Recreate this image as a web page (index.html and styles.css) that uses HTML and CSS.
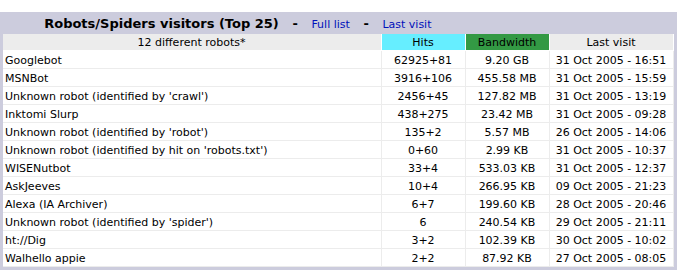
FILE: index.html
```html
<!DOCTYPE html>
<html>
<head>
<meta charset="utf-8">
<link rel="stylesheet" href="styles.css">
</head>
<body>
<div class="frame">
  <div class="title-row">
    <div class="title">Robots/Spiders visitors (Top 25) &nbsp; - &nbsp; <a href="#">Full list</a> &nbsp; - &nbsp; <a href="#">Last visit</a></div>
  </div>
  <table class="data">
    <tr class="head">
      <th class="c-name">12 different robots*</th>
      <th class="c-hits hits">Hits</th>
      <th class="c-bw bw">Bandwidth</th>
      <th class="c-last">Last visit</th>
    </tr>
    <tr><td class="name">Googlebot</td><td>62925+81</td><td>9.20 GB</td><td>31 Oct 2005 - 16:51</td></tr>
    <tr><td class="name">MSNBot</td><td>3916+106</td><td>455.58 MB</td><td>31 Oct 2005 - 15:59</td></tr>
    <tr><td class="name">Unknown robot (identified by 'crawl')</td><td>2456+45</td><td>127.82 MB</td><td>31 Oct 2005 - 13:19</td></tr>
    <tr><td class="name">Inktomi Slurp</td><td>438+275</td><td>23.42 MB</td><td>31 Oct 2005 - 09:28</td></tr>
    <tr><td class="name">Unknown robot (identified by 'robot')</td><td>135+2</td><td>5.57 MB</td><td>26 Oct 2005 - 14:06</td></tr>
    <tr><td class="name">Unknown robot (identified by hit on 'robots.txt')</td><td>0+60</td><td>2.99 KB</td><td>31 Oct 2005 - 10:37</td></tr>
    <tr><td class="name">WISENutbot</td><td>33+4</td><td>533.03 KB</td><td>31 Oct 2005 - 12:37</td></tr>
    <tr><td class="name">AskJeeves</td><td>10+4</td><td>266.95 KB</td><td>09 Oct 2005 - 21:23</td></tr>
    <tr><td class="name">Alexa (IA Archiver)</td><td>6+7</td><td>199.60 KB</td><td>28 Oct 2005 - 20:46</td></tr>
    <tr><td class="name">Unknown robot (identified by 'spider')</td><td>6</td><td>240.54 KB</td><td>29 Oct 2005 - 21:11</td></tr>
    <tr><td class="name">ht://Dig</td><td>3+2</td><td>102.39 KB</td><td>30 Oct 2005 - 10:02</td></tr>
    <tr><td class="name">Walhello appie</td><td>2+2</td><td>87.92 KB</td><td>27 Oct 2005 - 08:05</td></tr>
  </table>
</div>
</body>
</html>
```
FILE: styles.css
```css
html, body {
  margin: 0;
  padding: 0;
  background: #ffffff;
}
body {
  padding-top: 12px;
  font-family: "DejaVu Sans", Verdana, sans-serif;
}
.frame {
  width: 677px;
  box-sizing: border-box;
  background: #ccccdd;
  padding: 0 3px 3px 3px;
}
.title-row {
  display: flex;
  height: 22px;
  align-items: center;
}
.title {
  width: 70%;
  text-align: center;
  font-size: 13px;
  font-weight: bold;
  color: #000;
  white-space: nowrap;
}
.title a {
  font-size: 11px;
  font-weight: normal;
  color: #0011bb;
  text-decoration: none;
}
.data {
  width: 100%;
  border-collapse: separate;
  border-spacing: 0;
  background: #ffffff;
  table-layout: fixed;
}
.data th, .data td {
  font-size: 11px;
  font-weight: normal;
  line-height: 13px;
  color: #000;
  text-align: center;
  padding: 1px 2px 1px 1px;
  border-style: solid;
  border-color: #ececec;
  border-width: 0 1px 1px 0;
  white-space: nowrap;
}
.data td {
  height: 15px;
  padding-top: 2px;
  padding-bottom: 0;
}
.data th {
  height: 14px;
}
.head th {
  background: #ececec;
  border-color: #ffffff;
}
.data td.name {
  text-align: left;
  padding-left: 2px;
}
.c-hits { width: 80px; }
.c-bw { width: 80px; }
.c-last { width: 120px; }
.head th.hits { background: #66eeff; }
.head th.bw { background: #339944; }
```
